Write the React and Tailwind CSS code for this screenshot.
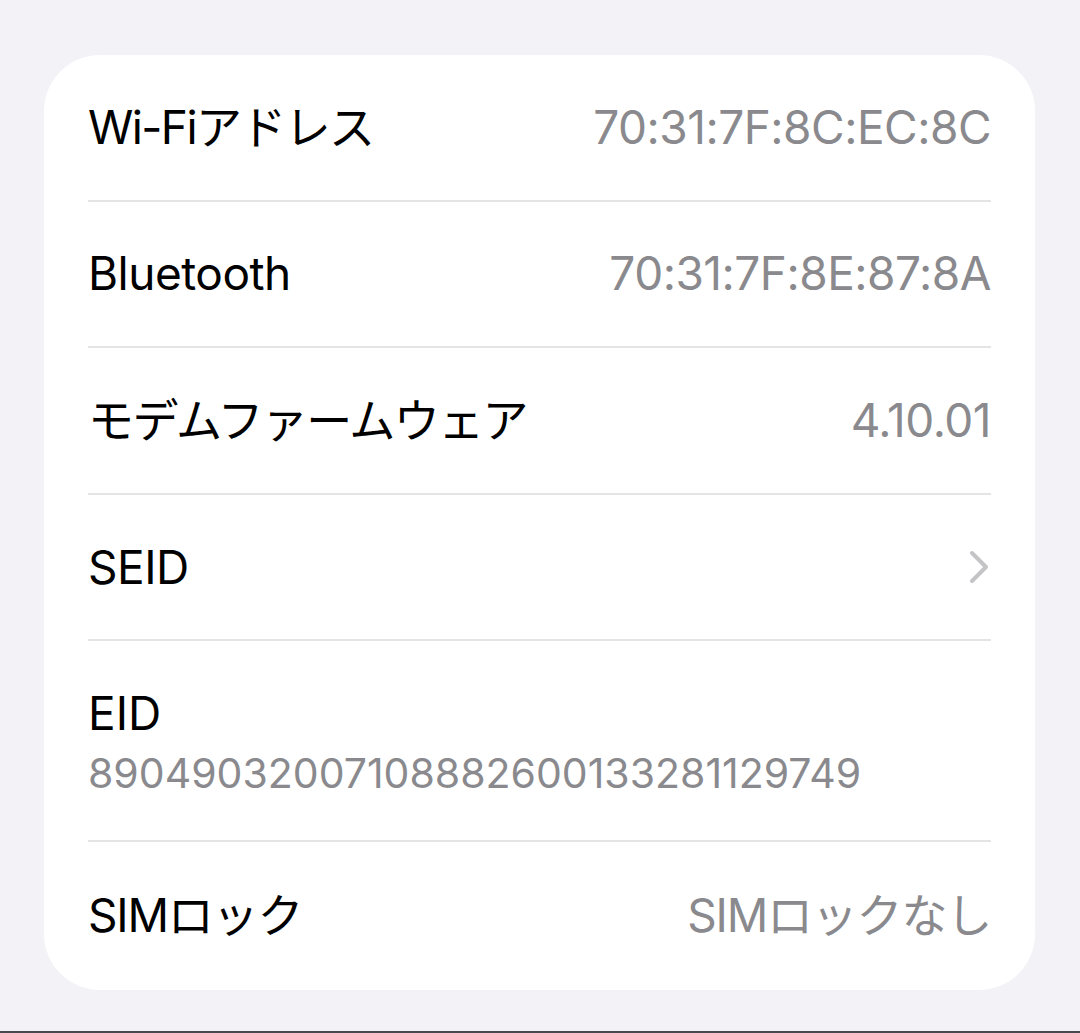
import React from 'react';

const rows = [
    { label: 'Wi-Fiアドレス', value: '70:31:7F:8C:EC:8C', jp: true },
    { label: 'Bluetooth', value: '70:31:7F:8E:87:8A' },
    { label: 'モデムファームウェア', value: '4.10.01', jp: true },
    { label: 'SEID', chevron: true },
];

const Chevron = () => (
    <svg width="22" height="36" viewBox="0 0 22 36" fill="none" className="mr-[1px]">
        <polyline
            points="4,4 18,18 4,32"
            stroke="#c4c4c7"
            strokeWidth="4"
            strokeLinecap="round"
            strokeLinejoin="round"
        />
    </svg>
);

const Row = ({ children, last }) => (
    <div className={last ? '' : 'border-b-2 border-[#e4e4e7]'}>{children}</div>
);

const App = () => {
    return (
        <div
            className="w-[1080px] h-[1033px] bg-[#f2f2f7] flex flex-col"
            style={{ fontFamily: 'Inter, "Noto Sans CJK JP", sans-serif' }}>
            <div className="mt-[55px] ml-[44px] w-[991px] bg-white rounded-[56px] pl-[44px] pr-[44px]">
                {rows.map(row => (
                    <Row key={row.label}>
                        <div className="h-[144.6px] flex items-center justify-between">
                            <span
                                className={
                                    row.jp
                                        ? 'text-[46px] text-black tracking-[-1.6px]'
                                        : 'text-[46px] text-black tracking-[-0.5px]'
                                }>
                                {row.label}
                            </span>
                            {row.chevron ? (
                                <Chevron />
                            ) : (
                                <span className="text-[46px] text-[#8a8a8e] tracking-[-0.5px]">{row.value}</span>
                            )}
                        </div>
                    </Row>
                ))}
                <Row>
                    <div className="h-[199px] flex flex-col justify-center pt-[4px]">
                        <span className="text-[46px] leading-[60px] text-black">EID</span>
                        <span className="text-[41px] leading-[60px] text-[#8a8a8e] tracking-[0px]">
                            89049032007108882600133281129749
                        </span>
                    </div>
                </Row>
                <Row last>
                    <div className="h-[148px] flex items-center justify-between pb-[2px]">
                        <span className="text-[46px] text-black tracking-[-1.2px]">SIMロック</span>
                        <span className="text-[46px] text-[#8a8a8e] tracking-[-1.2px]">SIMロックなし</span>
                    </div>
                </Row>
            </div>
            <div className="flex-1" />
            <div className="h-[2px] bg-[#4a4a4e]" />
        </div>
    );
};

export default App;
